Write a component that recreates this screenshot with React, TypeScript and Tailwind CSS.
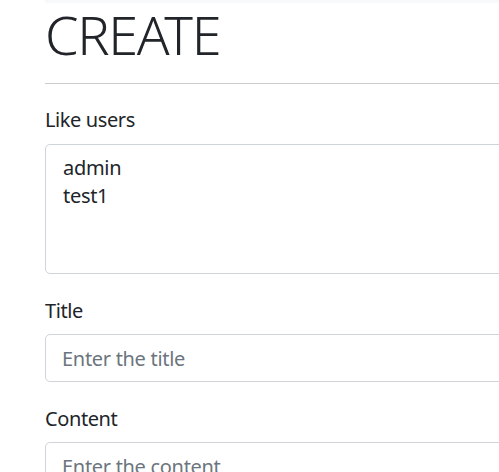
export default function App() {
  const likeUsers = ['admin', 'test1']

  return (
    <div className="h-[472px] w-[499px] overflow-hidden bg-white font-['Noto_Sans',sans-serif] text-[#212529]">
      <div className="ml-[45px] w-[640px]">
        <div className="h-[3px] bg-[#f8f9fa]" />

        <h1 className="pt-[1px] text-[54px] font-light leading-[60px] tracking-[-1.4px]">CREATE</h1>

        <hr className="mt-[19px] border-0 border-t border-[#cccccc]" />

        <form className="mt-[21px] flex flex-col">
          <label className="mb-[9px] text-[20px] leading-[30px] tracking-[-0.4px]">Like users</label>
          <div
            role="listbox"
            aria-multiselectable="true"
            className="h-[130px] rounded-[5px] border border-[#ced4da] pl-[17px] pt-[9px] text-[20px] leading-[28px] tracking-[-0.3px]"
          >
            {likeUsers.map((u) => (
              <div key={u}>{u}</div>
            ))}
          </div>

          <label className="mt-[22px] mb-[8px] text-[20px] leading-[30px] tracking-[-0.4px]">Title</label>
          <input
            readOnly
            placeholder="Enter the title"
            className="h-[48px] rounded-[5px] border border-[#ced4da] px-[16px] text-[20px] tracking-[-0.3px] outline-none placeholder:text-[#6c757d]"
          />

          <label className="mt-[22px] mb-[8px] text-[20px] leading-[30px] tracking-[-0.4px]">Content</label>
          <input
            readOnly
            placeholder="Enter the content"
            className="h-[48px] rounded-[5px] border border-[#ced4da] px-[16px] text-[20px] tracking-[-0.3px] outline-none placeholder:text-[#6c757d]"
          />
        </form>
      </div>
    </div>
  )
}
